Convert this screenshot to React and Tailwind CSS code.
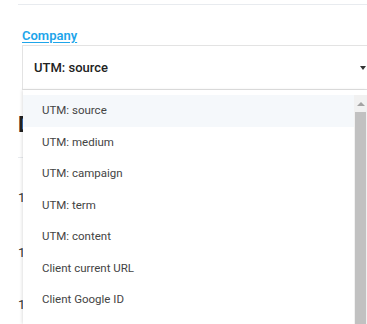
const options = [
  'UTM: source',
  'UTM: medium',
  'UTM: campaign',
  'UTM: term',
  'UTM: content',
  'Client current URL',
  'Client Google ID',
];

export default function App() {
  return (
    <div
      className="relative h-[324px] w-[367px] overflow-hidden bg-white"
      style={{ fontFamily: 'Roboto, "Liberation Sans", sans-serif' }}
    >
      <div className="ml-[18px] pt-[4px]">
        <div className="border-t border-[#e8ebef]" />
      </div>

      {/* company field */}
      <div className="ml-[22px] mt-[23px]">
        <a className="block text-[13px] font-semibold leading-[16px] text-[#1ea5ea] underline underline-offset-2">
          Company
        </a>
        <div className="mt-[1px] flex h-[45px] w-[360px] items-center border border-[#e3e3e3] pl-[11px] pr-[9px]">
          <span className="flex-1 text-[13px] font-medium text-[#222]">UTM: source</span>
          <span className="mr-[6px] h-0 w-0 border-x-[3px] border-t-[4px] border-x-transparent border-t-[#333]" />
        </div>
      </div>

      {/* content behind the menu */}
      <div className="ml-[18px] mt-[22px]">
        <div className="text-[22px] font-bold leading-[26px] text-[#222]">Details</div>
        <div className="mt-[19px] border-t border-[#e8ebef]" />
        <div className="mt-[30px] text-[13px] leading-[19px] text-[#333]">10</div>
        <div className="mt-[36px] text-[13px] leading-[19px] text-[#333]">10</div>
        <div className="mt-[33px] text-[13px] leading-[19px] text-[#333]">10</div>
      </div>

      {/* open menu */}
      <div className="absolute left-[23px] right-0 top-[90px] bottom-0 flex bg-white pt-[5px] shadow-[-1px_0_3px_rgba(0,0,0,0.12)]">
        <ul className="flex-1">
          {options.map((o, i) => (
            <li
              key={o}
              className={`flex h-[31.5px] items-center pl-[19px] text-[11.5px] text-[#444] ${i === 0 ? 'bg-[#f5f8fb]' : ''}`}
            >
              {o}
            </li>
          ))}
        </ul>
        <div className="flex w-[13px] flex-col bg-[#f1f1f1]">
          <div className="flex h-[17px] items-center justify-center">
            <span className="h-0 w-0 border-x-[4px] border-b-[4px] border-x-transparent border-b-[#a3a3a3]" />
          </div>
          <div className="mx-[1px] flex-1 bg-[#c1c1c1]" />
        </div>
      </div>
    </div>
  );
}
